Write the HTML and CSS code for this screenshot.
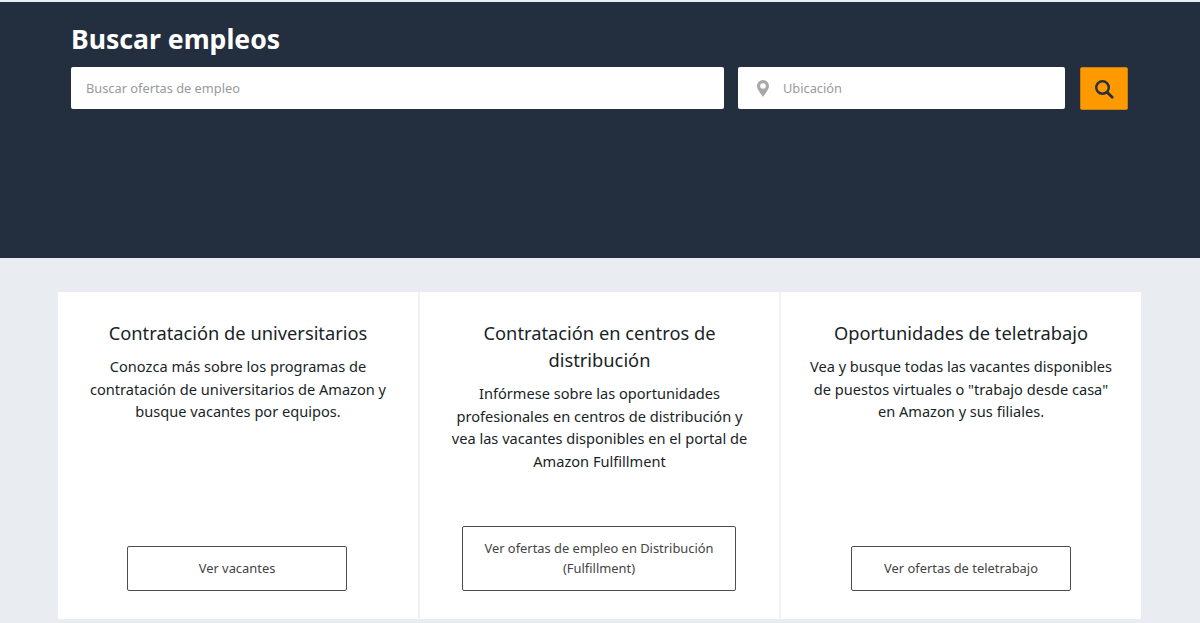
FILE: index.html
```html
<!DOCTYPE html>
<html lang="es">
<head>
    <meta charset="UTF-8">
    <meta name="viewport" content="width=device-width, initial-scale=1.0">
    <title>Buscar empleos</title>
    <link rel="stylesheet" href="styles.css">
</head>
<body>
    <section class="hero">
        <h1>Buscar empleos</h1>
        <form class="search-form">
            <div class="search-field keyword-field">
                <input type="text" placeholder="Buscar ofertas de empleo">
            </div>
            <div class="search-field location-field">
                <svg class="pin-icon" viewBox="0 0 12 17" width="12" height="17">
                    <path fill-rule="evenodd" fill="#a8a8a8" d="M6 0a6 6 0 0 1 6 6c0 3.500-3.800 7.500-6 11-2.200-3.500-6-7.500-6-11a6 6 0 0 1 6-6zM6 3.200a2.800 2.800 0 1 0 0 5.600a2.800 2.800 0 0 0 0-5.600z"/>
                </svg>
                <input type="text" placeholder="Ubicación">
            </div>
            <button type="button" class="search-button" aria-label="Buscar">
                <svg viewBox="0 0 20 20" width="20" height="20">
                    <circle cx="8.500" cy="8.500" r="6.300" fill="none" stroke="#232f3e" stroke-width="2.400"/>
                    <path d="M13.200 13.200l5 5" stroke="#232f3e" stroke-width="2.800" stroke-linecap="round"/>
                </svg>
            </button>
        </form>
    </section>

    <section class="cards">
        <div class="card">
            <h2>Contratación de universitarios</h2>
            <p>Conozca más sobre los programas de contratación de universitarios de Amazon y busque vacantes por equipos.</p>
            <a class="card-button" href="#">Ver vacantes</a>
        </div>
        <div class="card">
            <h2>Contratación en centros de distribución</h2>
            <p>Infórmese sobre las oportunidades profesionales en centros de distribución y vea las vacantes disponibles en el portal de Amazon Fulfillment</p>
            <a class="card-button wide-button" href="#">Ver ofertas de empleo en Distribución (Fulfillment)</a>
        </div>
        <div class="card">
            <h2>Oportunidades de teletrabajo</h2>
            <p>Vea y busque todas las vacantes disponibles de puestos virtuales o "trabajo desde casa" en Amazon y sus filiales.</p>
            <a class="card-button" href="#">Ver ofertas de teletrabajo</a>
        </div>
    </section>
</body>
</html>
```

FILE: styles.css
```css
* {
    box-sizing: border-box;
}

html,
body {
    height: 623px;
    overflow: hidden;
}

body {
    margin: 0;
    padding-top: 2px;
    font-family: "Noto Sans", sans-serif;
    background-color: #e9ecf1;
    color: #232f3e;
}

.hero {
    height: 256px;
    padding: 19px 72px 0 71px;
    background-color: #232f3e;
}

.hero h1 {
    margin: 0 0 9px;
    font-size: 26.600px;
    line-height: 37px;
    font-weight: 700;
    color: #ffffff;
}

.search-form {
    display: flex;
}

.search-field {
    display: flex;
    align-items: center;
    height: 42px;
    background-color: #ffffff;
    border-radius: 2px;
}

.keyword-field {
    width: 653px;
    margin-right: 14px;
    padding-left: 15px;
}

.location-field {
    width: 327px;
    margin-right: 15px;
    padding-left: 19px;
}

.pin-icon {
    flex: none;
    margin-right: 14px;
}

.search-field input {
    width: 100%;
    border: none;
    outline: none;
    padding: 0;
    font-family: inherit;
    font-size: 12.800px;
    background: transparent;
}

.search-field input::placeholder {
    color: #9a9a9a;
    opacity: 1;
}

.search-button {
    display: flex;
    align-items: center;
    justify-content: center;
    width: 48px;
    height: 43px;
    padding: 0;
    background-color: #ff9900;
    border: 1px solid #c9820f;
    border-radius: 2px;
}

.cards {
    display: grid;
    grid-template-columns: 360px 359px 360px;
    gap: 2px;
    width: 1083px;
    height: 327px;
    margin: 34px 0 0 58px;
    background-color: #f1f2f4;
}

.card {
    display: flex;
    flex-direction: column;
    align-items: center;
    padding: 27px 26px 28px;
    background-color: #ffffff;
    text-align: center;
}

.card h2 {
    margin: 0 0 9px;
    font-size: 18.300px;
    line-height: 27px;
    font-weight: 400;
    color: #1a1f27;
}

.card p {
    margin: 0;
    font-size: 14.600px;
    line-height: 22.600px;
    color: #1a1f27;
}

.card-button {
    display: flex;
    align-items: center;
    justify-content: center;
    width: 220px;
    height: 45px;
    margin-top: auto;
    padding: 0 16px 2px;
    border: 1px solid #4d4d4d;
    border-radius: 2px;
    font-size: 12.900px;
    line-height: 20px;
    color: #444444;
    text-decoration: none;
}

.card:first-child .card-button {
    margin-right: 2px;
}

.wide-button {
    width: 274px;
    height: 65px;
    margin-right: 1px;
}
```
